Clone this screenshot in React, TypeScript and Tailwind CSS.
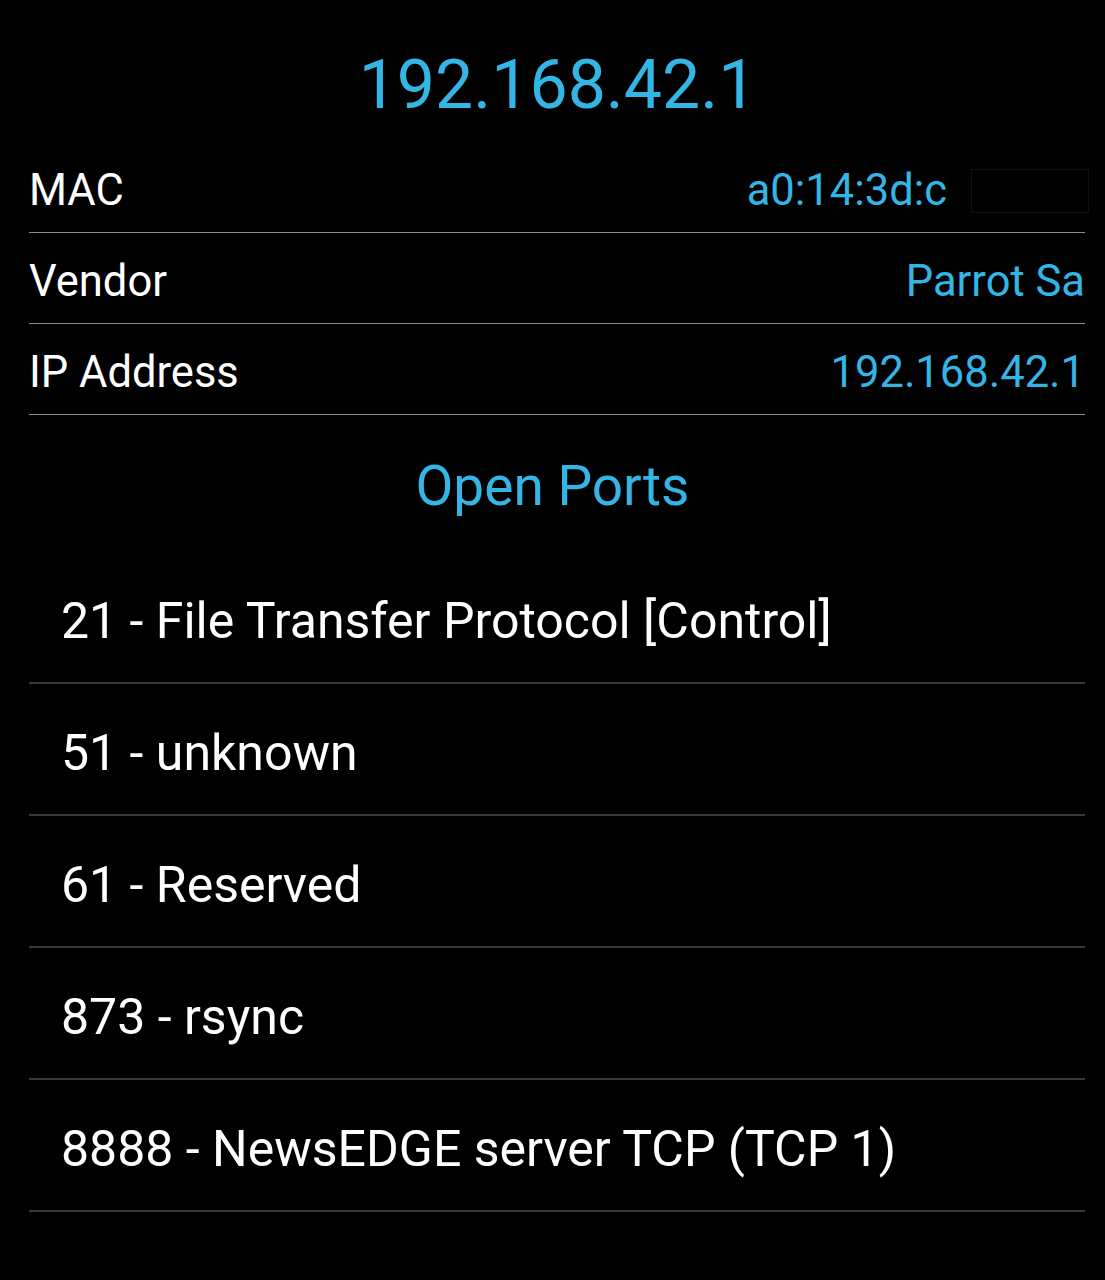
const info = [
  { label: "MAC", value: "a0:14:3d:c", redacted: true },
  { label: "Vendor", value: "Parrot Sa" },
  { label: "IP Address", value: "192.168.42.1" },
];

const ports = [
  "21 - File Transfer Protocol [Control]",
  "51 - unknown",
  "61 - Reserved",
  "873 - rsync",
  "8888 - NewsEDGE server TCP (TCP 1)",
];

export default function App() {
  return (
    <div className="min-h-[1280px] w-[1105px] bg-black font-['Roboto',sans-serif] antialiased">
      <div className="flex h-[142px] items-center justify-center pt-[27px] pl-[10px]">
        <h1 className="text-[68px] leading-none text-[#33b5e5]">192.168.42.1</h1>
      </div>

      <div className="px-[29px] pr-[20px]">
        {info.map((row) => (
          <div
            key={row.label}
            className="flex h-[91px] items-center justify-between border-b-[1.5px] border-[#7d8e9e] pt-[8px]"
          >
            <span className="text-[43.5px] text-white">{row.label}</span>
            <span className="flex items-center text-[43.5px] text-[#33b5e5]">
              {row.value}
              {row.redacted && (
                <span className="ml-[24px] mr-[-4px] h-[44px] w-[118px] border border-[#111] bg-black" />
              )}
            </span>
          </div>
        ))}
      </div>

      <div className="flex h-[137px] items-center justify-center pt-[6px]">
        <h2 className="text-[55px] text-[#33b5e5]">Open Ports</h2>
      </div>

      <ul className="pl-[29px] pr-[20px]">
        {ports.map((p) => (
          <li
            key={p}
            className="flex h-[132px] items-center border-b-2 border-[#383838] pt-[8px] pl-[32px] text-[50px] text-white"
          >
            {p}
          </li>
        ))}
      </ul>
    </div>
  );
}
